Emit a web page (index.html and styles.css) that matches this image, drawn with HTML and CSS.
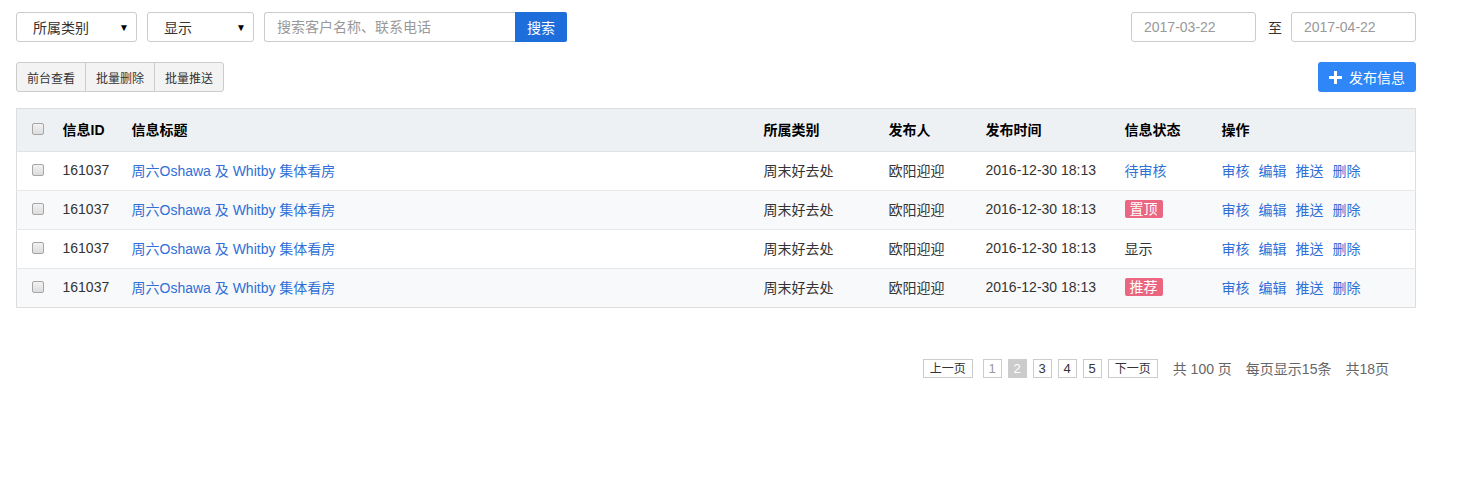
FILE: index.html
```html
<!DOCTYPE html>
<html lang="zh">
<head>
<meta charset="utf-8">
<title>信息管理</title>
<link rel="stylesheet" href="styles.css">
</head>
<body>
<div class="page">
  <div class="filter-row">
    <div class="filters">
      <div class="select sel-cat"><span>所属类别</span><span class="caret">▼</span></div>
      <div class="select sel-show"><span>显示</span><span class="caret">▼</span></div>
      <div class="search">
        <div class="search-input">搜索客户名称、联系电话</div>
        <button class="search-btn">搜索</button>
      </div>
    </div>
    <div class="dates">
      <div class="date-input">2017-03-22</div>
      <span class="to">至</span>
      <div class="date-input">2017-04-22</div>
    </div>
  </div>

  <div class="action-row">
    <div class="btn-group">
      <button class="gbtn">前台查看</button>
      <button class="gbtn">批量删除</button>
      <button class="gbtn">批量推送</button>
    </div>
    <button class="publish">
      <svg class="plus" width="13" height="13" viewBox="0 0 13 13"><rect x="5" y="0" width="3" height="13" fill="#fff"/><rect x="0" y="5" width="13" height="3" fill="#fff"/></svg>
      <span>发布信息</span>
    </button>
  </div>

  <table class="grid">
    <colgroup>
      <col class="c-chk"><col class="c-id"><col class="c-title"><col class="c-cat"><col class="c-pub"><col class="c-time"><col class="c-status"><col class="c-ops">
    </colgroup>
    <thead>
      <tr>
        <th class="chk"><span class="cb"></span></th>
        <th>信息ID</th>
        <th>信息标题</th>
        <th>所属类别</th>
        <th>发布人</th>
        <th>发布时间</th>
        <th>信息状态</th>
        <th>操作</th>
      </tr>
    </thead>
    <tbody>
      <tr>
        <td class="chk"><span class="cb"></span></td>
        <td>161037</td>
        <td><a class="link">周六Oshawa 及 Whitby 集体看房</a></td>
        <td>周末好去处</td>
        <td>欧阳迎迎</td>
        <td>2016-12-30 18:13</td>
        <td><a class="link">待审核</a></td>
        <td class="ops"><a class="link">审核</a><a class="link">编辑</a><a class="link">推送</a><a class="link">删除</a></td>
      </tr>
      <tr>
        <td class="chk"><span class="cb"></span></td>
        <td>161037</td>
        <td><a class="link">周六Oshawa 及 Whitby 集体看房</a></td>
        <td>周末好去处</td>
        <td>欧阳迎迎</td>
        <td>2016-12-30 18:13</td>
        <td><span class="badge">置顶</span></td>
        <td class="ops"><a class="link">审核</a><a class="link">编辑</a><a class="link">推送</a><a class="link">删除</a></td>
      </tr>
      <tr>
        <td class="chk"><span class="cb"></span></td>
        <td>161037</td>
        <td><a class="link">周六Oshawa 及 Whitby 集体看房</a></td>
        <td>周末好去处</td>
        <td>欧阳迎迎</td>
        <td>2016-12-30 18:13</td>
        <td>显示</td>
        <td class="ops"><a class="link">审核</a><a class="link">编辑</a><a class="link">推送</a><a class="link">删除</a></td>
      </tr>
      <tr>
        <td class="chk"><span class="cb"></span></td>
        <td>161037</td>
        <td><a class="link">周六Oshawa 及 Whitby 集体看房</a></td>
        <td>周末好去处</td>
        <td>欧阳迎迎</td>
        <td>2016-12-30 18:13</td>
        <td><span class="badge">推荐</span></td>
        <td class="ops"><a class="link">审核</a><a class="link">编辑</a><a class="link">推送</a><a class="link">删除</a></td>
      </tr>
    </tbody>
  </table>

  <div class="pager">
    <span class="pbtn wide">上一页</span>
    <span class="pbtn num first muted">1</span>
    <span class="pbtn num current">2</span>
    <span class="pbtn num">3</span>
    <span class="pbtn num">4</span>
    <span class="pbtn num">5</span>
    <span class="pbtn wide next">下一页</span>
    <span class="pinfo">共 100 页</span>
    <span class="pinfo">每页显示15条</span>
    <span class="pinfo">共18页</span>
  </div>
</div>
</body>
</html>
```

FILE: styles.css
```css
* { box-sizing: border-box; }
html, body { margin: 0; padding: 0; background: #fff; }
body {
  font-family: "Liberation Sans", Arial, "Noto Sans CJK SC", sans-serif;
  font-size: 14px;
  color: #333;
}
.page { width: 1400px; margin-left: 16px; padding-top: 12px; }

.filter-row { display: flex; justify-content: space-between; align-items: center; height: 30px; }
.filters { display: flex; align-items: center; }
.select {
  height: 30px; border: 1px solid #ccc; border-radius: 3px;
  display: flex; align-items: center; justify-content: space-between;
  padding: 0 7px 0 16px; font-size: 14px; color: #333; background: #fff;
}
.sel-cat { width: 121px; margin-right: 10px; }
.sel-show { width: 107px; margin-right: 10px; }
.caret { font-size: 10px; color: #000; }
.search { display: flex; height: 30px; }
.search-input {
  width: 251px; height: 30px; border: 1px solid #ccc; border-right: none;
  border-radius: 3px 0 0 3px; padding: 0 12px; line-height: 28px; color: #999; font-size: 14px;
}
.search-btn {
  width: 52px; height: 30px; border: none; background: #1d6edb; color: #fff;
  font-family: inherit; font-size: 14px; padding: 0; border-radius: 0 2px 2px 0;
}
.dates { display: flex; align-items: center; }
.date-input {
  width: 125px; height: 30px; border: 1px solid #ccc; border-radius: 3px;
  padding: 0 12px; line-height: 28px; color: #999; font-size: 14px;
}
.to { margin: 0 9px 0 12px; color: #333; font-size: 14px; }

.action-row { display: flex; justify-content: space-between; align-items: center; margin-top: 20px; height: 30px; }
.btn-group { display: flex; }
.gbtn {
  height: 30px; border: 1px solid #ccc; background: #f3f3f3; color: #333;
  font-family: inherit; font-size: 12px; padding: 0; width: 70px; margin-left: -1px;
}
.gbtn:first-child { margin-left: 0; border-radius: 3px 0 0 3px; }
.gbtn:last-child { border-radius: 0 3px 3px 0; }
.publish {
  width: 98px; height: 30px; border: none; border-radius: 3px; background: #2f86f6; color: #fff;
  font-family: inherit; font-size: 14px; display: flex; align-items: center; justify-content: flex-start; gap: 7px; padding: 0 0 0 11px;
}
.plus { width: 13px; height: 13px; flex: none; }

.grid {
  width: 1399px; margin-top: 16px; border-collapse: collapse; table-layout: fixed;
  border: 1px solid #ddd;
}
.c-chk { width: 46px; }
.c-id { width: 69px; }
.c-title { width: 632px; }
.c-cat { width: 125px; }
.c-pub { width: 97px; }
.c-time { width: 139px; }
.c-status { width: 97px; }
.c-ops { width: 194px; }
.grid th {
  height: 43px; background: #eef1f4; text-align: left; font-weight: bold; color: #000;
  padding: 0 0 2px; font-size: 14px; border-bottom: 1px solid #dfe2e6;
}
.grid td { height: 39px; padding: 0 0 3px; border-top: 1px solid #e6e8eb; white-space: nowrap; }
.grid tbody tr:nth-child(even) td { background: #f8f9fb; }
.grid th.chk, .grid td.chk { padding-left: 15px; }
.cb {
  display: block; width: 12px; height: 12px; border: 1px solid #a6a6a6; border-radius: 2px;
  background: linear-gradient(#f2f2f2, #dcdcdc);
}
.link { color: #2f6fd6; text-decoration: none; }
.ops .link { margin-right: 9px; }
.badge {
  display: inline-block; background: #ea6681; color: #fff; padding: 0 5px; border-radius: 2px;
  line-height: 18px; font-size: 14px;
}

.pager { display: flex; justify-content: flex-end; align-items: center; margin-top: 50px; padding-right: 27px; color: #666; }
.pbtn {
  height: 19px; border: 1px solid #ccc; line-height: 18px; text-align: center; font-size: 12px; color: #333;
}
.pbtn.wide { width: 50px; }
.pbtn.num { width: 19px; margin-left: 6px; font-size: 13px; }
.pbtn.num.first { margin-left: 10px; }
.pbtn.muted { color: #999; }
.pbtn.current { background: #ccc; border-color: #ccc; color: #fff; }
.pbtn.next { margin-left: 6px; }
.pinfo { margin-left: 15px; font-size: 14px; color: #666; }
.pinfo + .pinfo { margin-left: 14px; }
```
